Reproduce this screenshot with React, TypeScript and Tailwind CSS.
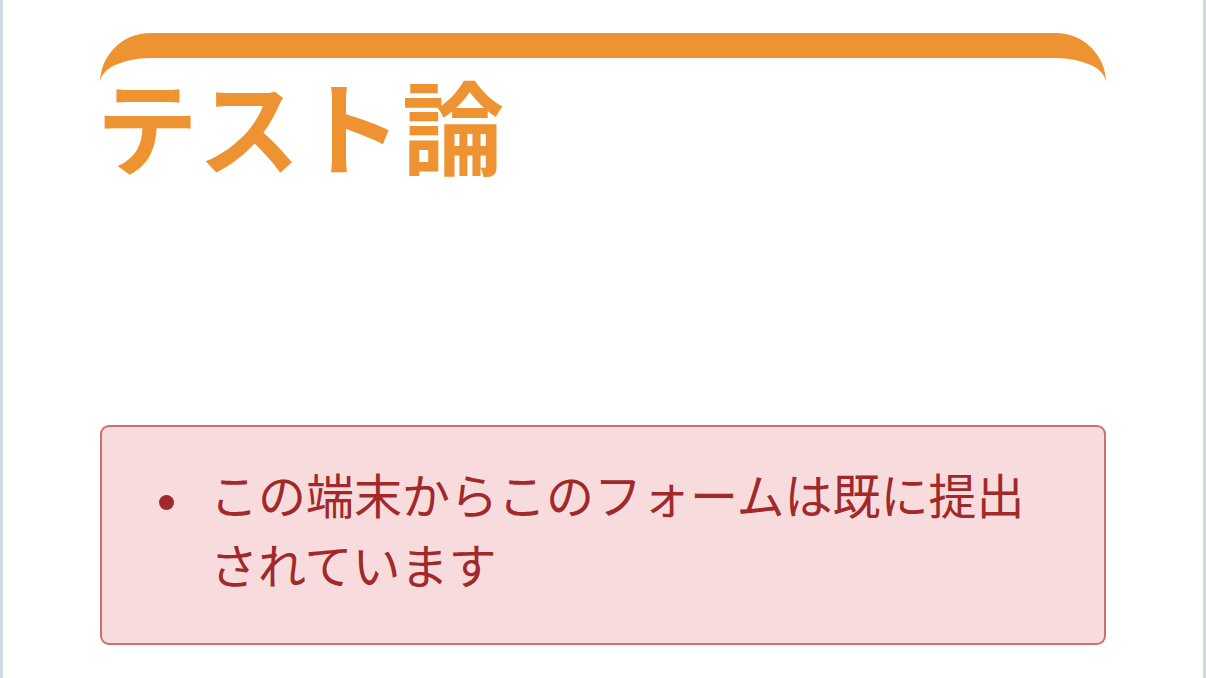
export default function App() {
  return (
    <div className="w-[1206px] h-[678px] overflow-hidden bg-[#d3d9e3] px-[3px]">
      <div className="h-full bg-white pl-[97px] pr-[97px] pt-[33px]" style={{ fontFamily: '"Noto Sans CJK JP", "Noto Sans", sans-serif' }}>
        <div className="h-[52px] border-t-[25px] border-[#ee9332] rounded-t-[50px] border-x-0 border-b-0 border-solid"></div>
        <h1 className="-mt-[31px] -ml-[4px] text-[102px] font-bold leading-[140px] text-[#ee9332]">テスト論</h1>
        <div className="mt-[231px] rounded-[9px] border-2 border-[#cd6e70] bg-[#f8dcdd] pl-[40px] pr-[30px] pt-[31px] pb-[45px] text-[#a2292a]">
          <div className="flex">
            <span className="mt-[37px] ml-[17px] mr-[36px] h-[15px] w-[15px] shrink-0 rounded-full bg-[#a2292a]"></span>
            <p className="text-[48px] leading-[70px] w-[820px]">この端末からこのフォームは既に提出されています</p>
          </div>
        </div>
      </div>
    </div>
  );
}
